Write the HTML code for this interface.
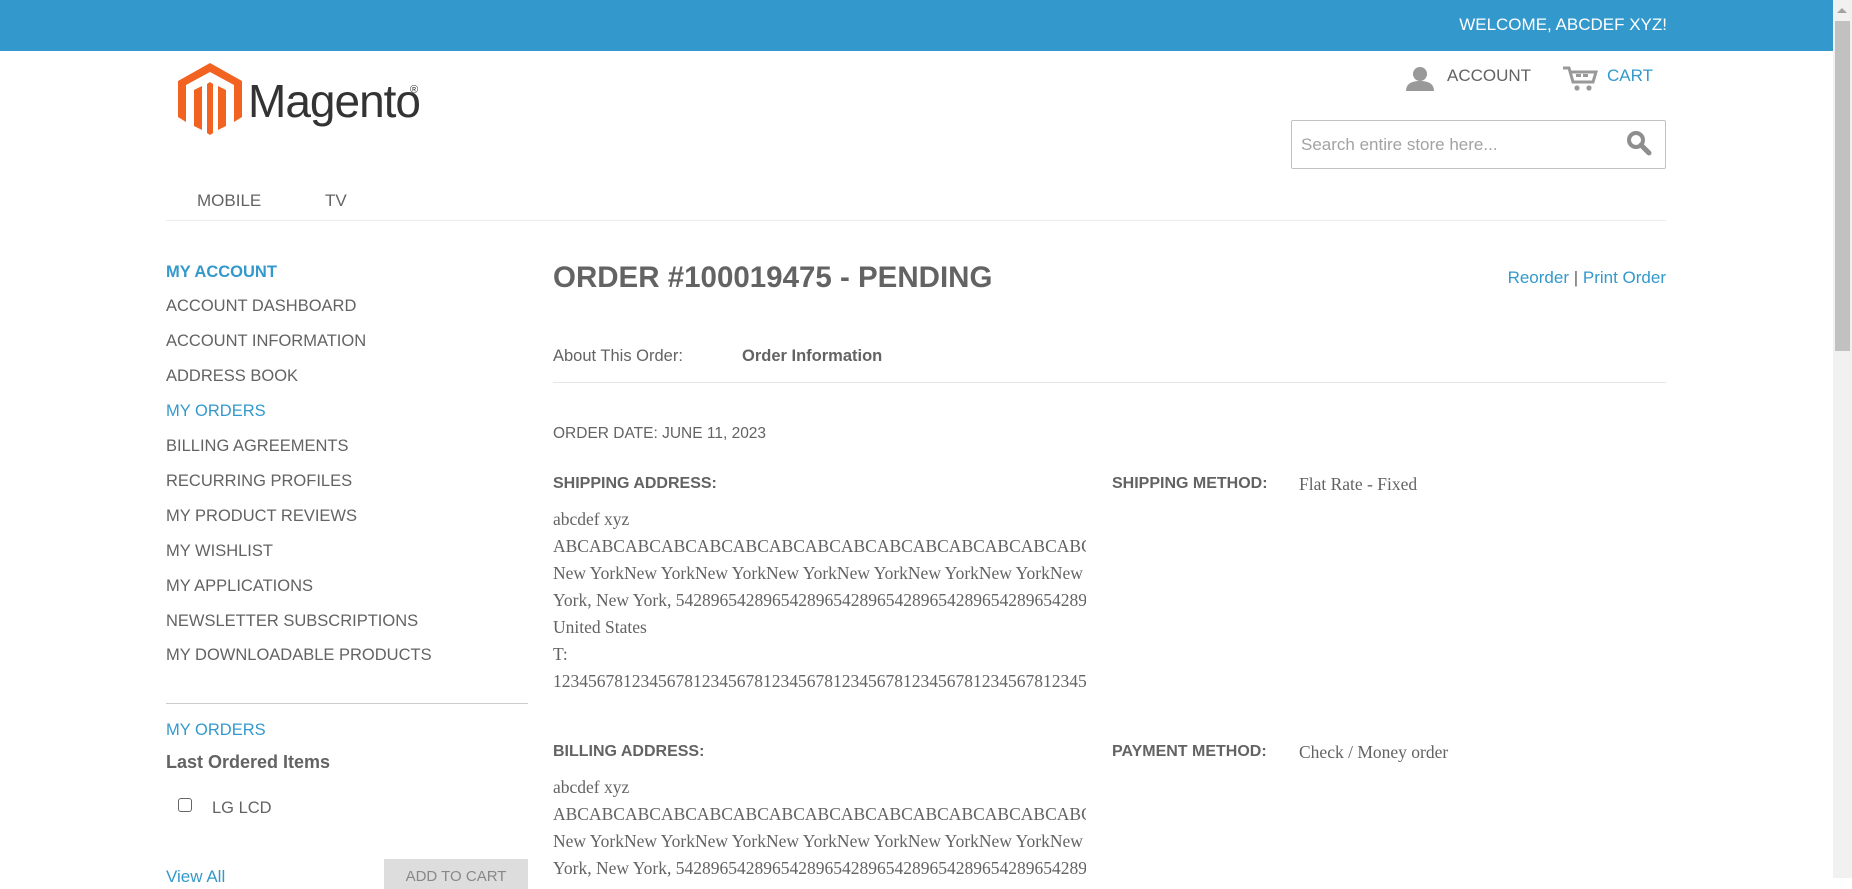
<!DOCTYPE html>
<html><head><meta charset="utf-8"><style>
*{margin:0;padding:0;box-sizing:border-box}
body{width:1852px;height:878px;overflow:hidden;background:#fff;font-family:"Liberation Sans",sans-serif;color:#636363;position:relative}
.a{position:absolute;white-space:nowrap}
.bar{left:0;top:0;width:1833px;height:51px;background:#3399cc}
.sb{left:1833px;top:0;width:19px;height:878px;background:#f1f1f1}
.th{left:1835px;top:21px;width:15px;height:330px;background:#c1c1c1}
.side{left:166px;font-size:16.5px;text-transform:uppercase;color:#636363;line-height:20px}
.blue{color:#3399cc}
.serif{font-family:"Liberation Serif",serif;font-size:17.5px;color:#636363;line-height:27px;width:533px;overflow:hidden}
.lbl{font-size:16px;font-weight:bold;color:#636363}
</style></head><body>
<div class="a bar"></div>
<div class="a" style="right:185px;top:15px;color:#fff;font-size:17px">WELCOME, ABCDEF XYZ!</div>
<div class="a sb"></div><div class="a th"></div>
<div class="a" style="left:1837px;top:8px;width:0;height:0;border-left:5px solid transparent;border-right:5px solid transparent;border-bottom:5px solid #a3a3a3"></div>

<svg class="a" style="left:178px;top:63px" width="64" height="72" viewBox="0 0 64 72">
<polygon points="32,0 64,18 64,54 56,59 56,22 32,9 8,22 8,59 0,54 0,18" fill="#f26322"/>
<polygon points="16,27 24,23 24,67 16,63" fill="#f26322"/>
<polygon points="40,23 48,27 48,63 40,67" fill="#f26322"/>
<polygon points="29,21 32,19 35,21 35,70 32,72 29,70" fill="#f26322"/>
</svg>
<div class="a" style="left:248px;top:74px;font-size:46px;color:#333;letter-spacing:-1px">Magento</div>
<div class="a" style="left:410px;top:84px;font-size:11px;color:#333">®</div>

<svg class="a" style="left:1405px;top:66px" width="30" height="25" viewBox="0 0 30 25"><circle cx="15" cy="8" r="7" fill="#999"/><path d="M1 25 Q1 15 15 15 Q29 15 29 25Z" fill="#999"/></svg>
<div class="a" style="left:1447px;top:66px;font-size:17px;color:#636363">ACCOUNT</div>
<svg class="a" style="left:1562px;top:66px" width="36" height="26" viewBox="0 0 36 26"><path d="M1 2 H7 L11 16 H31 L34 6 H9" fill="none" stroke="#999" stroke-width="3"/><rect x="14" y="8" width="5" height="3" fill="#999"/><rect x="21" y="8" width="5" height="3" fill="#999"/><circle cx="15" cy="22" r="2.6" fill="#999"/><circle cx="27" cy="22" r="2.6" fill="#999"/></svg>
<div class="a blue" style="left:1607px;top:66px;font-size:17px">CART</div>

<div class="a" style="left:1291px;top:120px;width:375px;height:49px;border:1px solid #c2c2c2;border-radius:2px"></div>
<div class="a" style="left:1301px;top:135px;font-size:17px;color:#a3a3a3">Search entire store here...</div>
<svg class="a" style="left:1626px;top:130px" width="26" height="26" viewBox="0 0 26 26"><circle cx="10" cy="10" r="7" fill="none" stroke="#8e8e8e" stroke-width="4"/><path d="M15 15 L23 23" stroke="#8e8e8e" stroke-width="5" stroke-linecap="round"/></svg>

<div class="a" style="left:197px;top:191px;font-size:17px">MOBILE</div>
<div class="a" style="left:325px;top:191px;font-size:17px">TV</div>
<div class="a" style="left:166px;top:220px;width:1500px;height:1px;background:#ededed"></div>

<div class="a side blue" style="top:262px;font-weight:bold">My Account</div>
<div class="a side" style="top:296px">Account Dashboard</div>
<div class="a side" style="top:331px">Account Information</div>
<div class="a side" style="top:366px">Address Book</div>
<div class="a side blue" style="top:401px">My Orders</div>
<div class="a side" style="top:436px">Billing Agreements</div>
<div class="a side" style="top:471px">Recurring Profiles</div>
<div class="a side" style="top:506px">My Product Reviews</div>
<div class="a side" style="top:541px">My Wishlist</div>
<div class="a side" style="top:576px">My Applications</div>
<div class="a side" style="top:611px">Newsletter Subscriptions</div>
<div class="a side" style="top:645px">My Downloadable Products</div>
<div class="a" style="left:166px;top:703px;width:362px;height:1px;background:#ccc"></div>
<div class="a side blue" style="top:720px">My Orders</div>
<div class="a" style="left:166px;top:752px;font-size:18px;font-weight:bold;color:#636363">Last Ordered Items</div>
<div class="a" style="left:178px;top:798px;width:14px;height:14px;border:1.5px solid #666;border-radius:3px"></div>
<div class="a" style="left:212px;top:799px;font-size:16.5px">LG LCD</div>
<div class="a blue" style="left:166px;top:867px;font-size:17px">View All</div>
<div class="a" style="left:384px;top:859px;width:144px;height:30px;background:#ddd;color:#888;font-size:15px;text-align:center;padding-top:9px">ADD TO CART</div>

<div class="a" style="left:553px;top:261px;font-size:29.5px;color:#636363;font-weight:bold">ORDER #100019475 - PENDING</div>
<div class="a blue" style="right:186px;top:268px;font-size:17px">Reorder <span style="color:#636363">|</span> Print Order</div>
<div class="a" style="left:553px;top:347px;font-size:16.5px">About This Order:</div>
<div class="a" style="left:742px;top:347px;font-size:16.5px;font-weight:bold">Order Information</div>
<div class="a" style="left:553px;top:382px;width:1113px;height:1px;background:#e6e6e6"></div>
<div class="a" style="left:553px;top:425px;font-size:15.5px">ORDER DATE: JUNE 11, 2023</div>

<div class="a lbl" style="left:553px;top:475px">SHIPPING ADDRESS:</div>
<div class="a serif" style="left:553px;top:506px">abcdef xyz<br>ABCABCABCABCABCABCABCABCABCABCABCABCABCABCABCABC<br>New YorkNew YorkNew YorkNew YorkNew YorkNew YorkNew YorkNew York<br>York, New York, 542896542896542896542896542896542896542896542896<br>United States<br>T:<br>1234567812345678123456781234567812345678123456781234567812345678</div>
<div class="a lbl" style="left:1112px;top:475px">SHIPPING METHOD:</div>
<div class="a serif" style="left:1299px;top:471px;width:300px">Flat Rate - Fixed</div>

<div class="a lbl" style="left:553px;top:743px">BILLING ADDRESS:</div>
<div class="a serif" style="left:553px;top:774px">abcdef xyz<br>ABCABCABCABCABCABCABCABCABCABCABCABCABCABCABCABC<br>New YorkNew YorkNew YorkNew YorkNew YorkNew YorkNew YorkNew York<br>York, New York, 542896542896542896542896542896542896542896542896</div>
<div class="a lbl" style="left:1112px;top:743px">PAYMENT METHOD:</div>
<div class="a serif" style="left:1299px;top:739px;width:300px">Check / Money order</div>
</body></html>
